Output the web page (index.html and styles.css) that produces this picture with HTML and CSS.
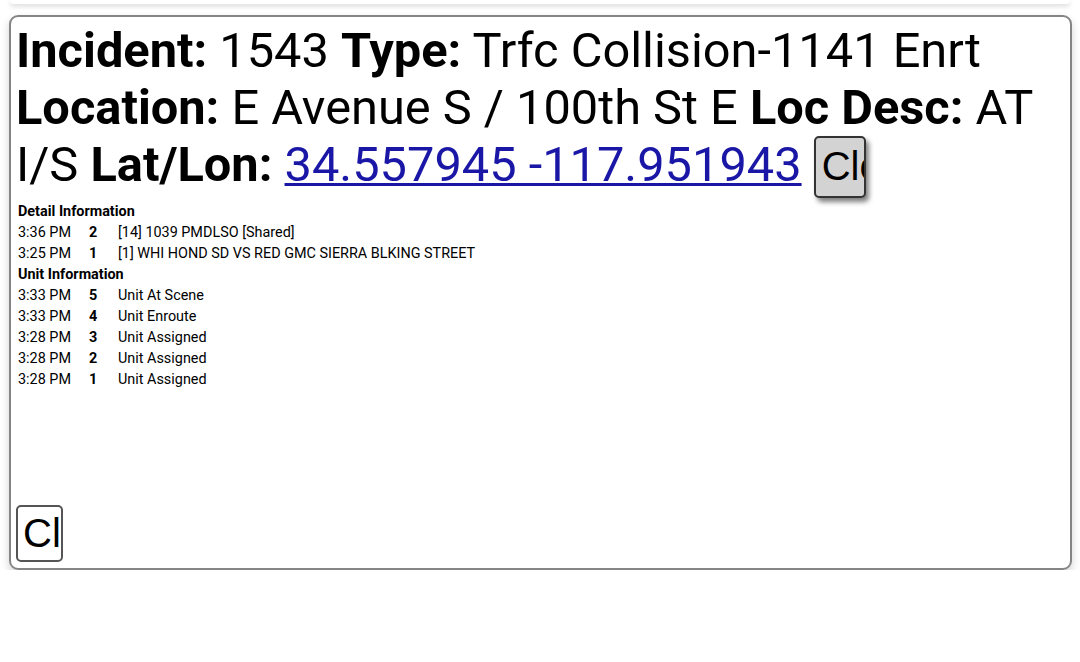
FILE: index.html
```html
<!DOCTYPE html>
<html>
<head>
<meta charset="utf-8">
<link rel="stylesheet" href="styles.css">
</head>
<body>
<div class="prev-card"></div>
<div class="card">
  <div class="header">
    <b>Incident:</b> 1543 <b>Type:</b> Trfc Collision-1141 Enrt <b>Location:</b> E Avenue S / 100th St E <b>Loc Desc:</b> AT I/S <b>Lat/Lon:</b> <a class="coords" href="#">34.557945 -117.951943</a> <button class="btn btn-map">Close</button>
  </div>
  <div class="details">
    <div class="section-title">Detail Information</div>
    <table class="log">
      <tr><td class="t">3:36 PM</td><td class="n">2</td><td>[14] 1039 PMDLSO [Shared]</td></tr>
      <tr><td class="t">3:25 PM</td><td class="n">1</td><td>[1] WHI HOND SD VS RED GMC SIERRA BLKING STREET</td></tr>
    </table>
    <div class="section-title">Unit Information</div>
    <table class="log">
      <tr><td class="t">3:33 PM</td><td class="n">5</td><td>Unit At Scene</td></tr>
      <tr><td class="t">3:33 PM</td><td class="n">4</td><td>Unit Enroute</td></tr>
      <tr><td class="t">3:28 PM</td><td class="n">3</td><td>Unit Assigned</td></tr>
      <tr><td class="t">3:28 PM</td><td class="n">2</td><td>Unit Assigned</td></tr>
      <tr><td class="t">3:28 PM</td><td class="n">1</td><td>Unit Assigned</td></tr>
    </table>
  </div>
  <div class="footer">
    <button class="btn btn-close">Close</button>
  </div>
</div>
</body>
</html>
```
FILE: styles.css
```css
html, body {
  margin: 0;
  padding: 0;
  background: #ffffff;
}
body {
  font-family: Roboto, "Liberation Sans", sans-serif;
  color: #000;
}
.prev-card {
  height: 4px;
  margin: 0 10px 0 10px;
  background: #ffffff;
  border-radius: 0 0 8px 8px;
  box-shadow: 0 2px 5px rgba(0,0,0,0.18);
}
.card {
  margin: 11px 8px 0 9px;
  height: 555px;
  border: 2px solid #858585;
  border-radius: 9px;
  box-shadow: 0 4px 8px rgba(0,0,0,0.18);
  display: flex;
  flex-direction: column;
  box-sizing: border-box;
  padding: 0 0 6px 5px;
}
.header {
  font-size: 48.75px;
  line-height: 57px;
  padding-top: 5px;
}
.header b {
  font-weight: 700;
}
.coords {
  color: #1a17a6;
  text-decoration: underline;
  text-decoration-thickness: 3px;
}
.btn {
  font-family: "Liberation Sans", Arial, sans-serif;
  font-size: 40px;
  overflow: hidden;
  white-space: nowrap;
  text-align: left;
  color: #000;
  border-radius: 5px;
  box-sizing: border-box;
  cursor: pointer;
}
.btn-map {
  width: 52px;
  height: 62px;
  margin: -10px 0;
  padding: 0 0 0 6px;
  background: #d3d3d3;
  border: 2px solid #333;
  box-shadow: 3px 4px 5px rgba(0,0,0,0.5);
  vertical-align: 1px;
}
.details {
  padding: 8px 0 0 2px;
  font-size: 14.4px;
  flex: 1;
}
.section-title {
  font-weight: 700;
  line-height: 21px;
}
.log {
  border-collapse: collapse;
  font-size: 14.4px;
}
.log td {
  padding: 0;
  line-height: 21px;
  vertical-align: top;
}
.log td.t {
  width: 71px;
}
.log td.n {
  width: 29px;
  font-weight: 700;
}
.footer {
  padding-left: 0;
}
.btn-close {
  width: 47px;
  height: 57px;
  padding: 0 0 0 5px;
  background: #ffffff;
  border: 2px solid #555;
}
```
